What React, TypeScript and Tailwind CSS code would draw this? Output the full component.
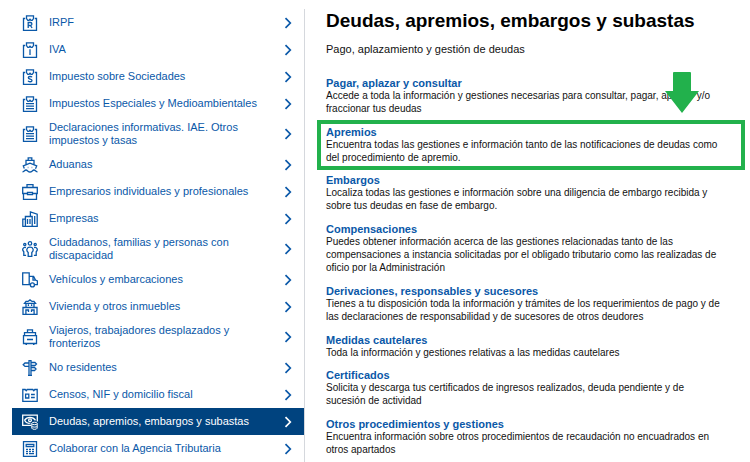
import type { ReactNode } from "react";

const clip = (
  <>
    <path d="M3.200 3.500H1.500v11.900h13V3.500h-1.700" />
    <path d="M4.500.8h7v2.800L10.200 5.300H9L8 4.200 7 5.300H5.800L4.500 3.600z" />
  </>
);

const lines = (
  <>
    {clip}
    <path d="M4 7.600h8M4 10.100h8M4 12.600h8" />
  </>
);

const icons: Record<string, ReactNode> = {
  irpf: (
    <>
      {clip}
      <path d="M6.200 13V7.500h2.200a1.500 1.500 0 0 1 0 3H6.200M8.400 10.500l1.700 2.500" />
    </>
  ),
  iva: (
    <>
      {clip}
      <path d="M8 7.200V13" />
    </>
  ),
  sociedades: (
    <>
      {clip}
      <path d="M10 8.300C9.400 7.200 6.300 7.100 6.300 8.700c0 1.800 3.700.9 3.700 2.700 0 1.800-3.300 1.700-4 .4" />
    </>
  ),
  especiales: lines,
  declaraciones: lines,
  aduanas: (
    <>
      <path d="M6.200 3.200V.9h3.600v2.300M4 7.500V3.400h8v4.100M2.300 11.500 1.300 8.900 8 6.200l6.700 2.700-1.200 2.900" />
      <path d="M.5 14.800c1.500 0 2-1.800 3.500-1.800s2 2 4 2 2.500-2 4-2 2 1.800 3.500 1.800" />
      <path d="M5.800 10.500h.5M9.700 10.500h.5" />
    </>
  ),
  empresarios: (
    <>
      <path d="M5 3.500V.7h6v2.800M5.400 9.500H.7V3.500h14.600v6h-4.700M1.500 9.500v5.900h13V9.500" />
      <path d="M5.500 8.500h5v2.200h-5z" />
    </>
  ),
  empresas: (
    <>
      <path d="M.8 15.400V8.200h2.400M3.400 15.400V5.500h6.800v9.900M8.400 5.300V.9l6.800 2.200v12.300H.3" />
      <path d="M5.500 8v5M8 8v5M12.700 5v8" />
    </>
  ),
  ciudadanos: (
    <>
      <circle cx="8" cy="2.400" r="1.700" />
      <circle cx="2.800" cy="3.500" r="1.100" />
      <circle cx="13.200" cy="3.500" r="1.100" />
      <path d="M6.200 15.400v-3.800C3.800 9.500 4.700 6.200 8 6.200s4.200 3.300 1.800 5.400v3.800z" />
      <path d="M4 6.500C.6 5.800-.2 8.900 1.800 10.800v3.500h2.300M12 6.500c3.400-.7 4.200 2.400 2.200 4.300v3.500h-2.300" />
    </>
  ),
  vehiculos: (
    <>
      <path d="M8 12.600H.7V.9h6.500v11.700M7.200 4.400h4.400l1.900 3.700 1.900.8v3.700h-2.700M11 4.400v3.700h2.500" />
      <circle cx="10.400" cy="12.900" r="2" />
    </>
  ),
  vivienda: (
    <>
      <path d="M2.500 4.300 4 2.400h2L8 .9l2 1.500h2l1.500 1.900zM4 4.500v4M12 4.500v4M1 8.500h14v6.800H1z" />
      <path d="M6.400 5.300v1.700M9.600 5.300v1.700M3.900 15v-4h2.600v2M9.500 13v-2h2.600v4" />
    </>
  ),
  viajeros: (
    <>
      <path d="M5.500 3.500V.8h5v2.700M2.500 6.500V3.700h11v2.800M1.500 6.700h13v7.800h-13zM5 10.500h6" />
      <path d="M3.500 15.400H5M11 15.400h1.500" />
    </>
  ),
  residentes: (
    <>
      <path d="M7 15.500V.7h2v14.800M6 15.400h4" />
      <path d="M7 3H3L1.200 4.700 3 6.400h4M9 2.500h4L14.500 4 13 5.500H9M9 7.500h3.500L14 9l-1.500 1.500H9" />
    </>
  ),
  censos: (
    <>
      <path d="M.8 2.500h2.400l1 1.300 1-1.300h5.600l1 1.300 1-1.300h2.400v11.900H.8z" />
      <path d="M3.600 7.200h3.200v3.800H3.600zM9 7.500h3.800M9 10.500h3.800" />
    </>
  ),
  deudas: (
    <>
      <path d="M9 11.300H.7V1.200h14.600v6.300" />
      <path d="M2.500 6.300C5 2.500 11 2.500 13.500 6.300M2.500 6.300C4 8.700 6.500 9.800 8.500 9" />
      <circle cx="8" cy="6.200" r="1.400" />
      <path d="M9.800 9.200c0-1.300 5.400-1.300 5.400 0v5c0 1.500-5.400 1.500-5.400 0zM9.800 9.800c0 1.200 5.400 1.200 5.400 0M9.800 12.200c0 1.200 5.400 1.200 5.400 0" strokeWidth="1" />
    </>
  ),
  colaborar: (
    <>
      <path d="M1.500.7h13v14.700h-13zM4.200 3.500h7.600v2.200H4.200z" />
      <path d="M4 8.500h2M7 8.500h2M10 8.500h2M4 10.600h2M7 10.600h2M10 10.600h2M4 12.700h2M7 12.700h5" />
    </>
  ),
};

const menu: [string, string][] = [
  ["irpf", "IRPF"],
  ["iva", "IVA"],
  ["sociedades", "Impuesto sobre Sociedades"],
  ["especiales", "Impuestos Especiales y Medioambientales"],
  ["declaraciones", "Declaraciones informativas. IAE. Otros impuestos y tasas"],
  ["aduanas", "Aduanas"],
  ["empresarios", "Empresarios individuales y profesionales"],
  ["empresas", "Empresas"],
  ["ciudadanos", "Ciudadanos, familias y personas con discapacidad"],
  ["vehiculos", "Vehículos y embarcaciones"],
  ["vivienda", "Vivienda y otros inmuebles"],
  ["viajeros", "Viajeros, trabajadores desplazados y fronterizos"],
  ["residentes", "No residentes"],
  ["censos", "Censos, NIF y domicilio fiscal"],
  ["deudas", "Deudas, apremios, embargos y subastas"],
  ["colaborar", "Colaborar con la Agencia Tributaria"],
];

const topics: [string, string][] = [
  ["Pagar, aplazar y consultar", "Accede a toda la información y gestiones necesarias para consultar, pagar, aplazar y/o\nfraccionar tus deudas"],
  ["Apremios", "Encuentra todas las gestiones e información tanto de las notificaciones de deudas como\ndel procedimiento de apremio."],
  ["Embargos", "Localiza todas las gestiones e información sobre una diligencia de embargo recibida y\nsobre tus deudas en fase de embargo."],
  ["Compensaciones", "Puedes obtener información acerca de las gestiones relacionadas tanto de las\ncompensaciones a instancia solicitadas por el obligado tributario como las realizadas de\noficio por la Administración"],
  ["Derivaciones, responsables y sucesores", "Tienes a tu disposición toda la información y trámites de los requerimientos de pago y de\nlas declaraciones de responsabilidad y de sucesores de otros deudores"],
  ["Medidas cautelares", "Toda la información y gestiones relativas a las medidas cautelares"],
  ["Certificados", "Solicita y descarga tus certificados de ingresos realizados, deuda pendiente y de\nsucesión de actividad"],
  ["Otros procedimientos y gestiones", "Encuentra información sobre otros procedimientos de recaudación no encuadrados en\notros apartados"],
];

function MenuItem({ icon, label }: { icon: string; label: string }) {
  const active = icon === "deudas";
  return (
    <li>
      <a
        href={"#" + icon}
        aria-current={active ? "page" : undefined}
        className={
          "flex min-h-[27px] items-center gap-[11px] py-1 pr-3 pl-[10px] " +
          (active ? "bg-[#00437f] text-white" : "text-[#0a58a8]")
        }
      >
        <svg viewBox="0 0 16 16" className="size-4 shrink-0" fill="none" stroke="currentColor" strokeWidth="1.3" aria-hidden="true">
          {icons[icon]}
        </svg>
        <span className="flex-1">{label}</span>
        <svg viewBox="0 0 8 12" className="h-3 w-2 shrink-0" fill="none" stroke="currentColor" strokeWidth="1.700" aria-hidden="true">
          <path d="M1.500 1.200 6.300 6l-4.800 4.800" />
        </svg>
      </a>
    </li>
  );
}

export default function App() {
  return (
    <div className="flex bg-white pt-[9px] font-['Liberation_Sans',Arial,sans-serif] text-[11px] leading-[13px] text-[#111]">
      <nav aria-label="Temas" className="w-[305px] shrink-0 border-r border-[#d5d8dd] pl-3">
        <ul>
          {menu.map(([icon, label]) => (
            <MenuItem key={icon} icon={icon} label={label} />
          ))}
        </ul>
      </nav>
      <main className="flex flex-1 flex-col pr-[14px] pb-[6px] pl-[21px]">
        <h1 className="text-[19px] leading-6 font-bold text-black">Deudas, apremios, embargos y subastas</h1>
        <p className="mt-[10px]">Pago, aplazamiento y gestión de deudas</p>
        <ul className="mt-[21px] flex flex-1 flex-col justify-between">
          {topics.map(([title, text]) => (
            <li key={title} className="relative">
              <h2 className="leading-3 font-bold">
                <a href="#tema" className="text-[#0a58a8]">{title}</a>
              </h2>
              <p className="text-[10px] whitespace-pre-line">{text}</p>
              {title === "Apremios" && (
                <div className="pointer-events-none absolute -inset-x-[9px] -inset-y-[6px] border-4 border-[#22b14c]">
                  <svg viewBox="0 0 34 41" className="absolute right-[42px] bottom-full mb-[11px] h-[41px] w-[34px]" fill="#22b14c" aria-hidden="true">
                    <path d="M9 0h16a1 1 0 0 1 1 1v18h8L17 41 0 19h8V1a1 1 0 0 1 1-1z" />
                  </svg>
                </div>
              )}
            </li>
          ))}
        </ul>
      </main>
    </div>
  );
}
